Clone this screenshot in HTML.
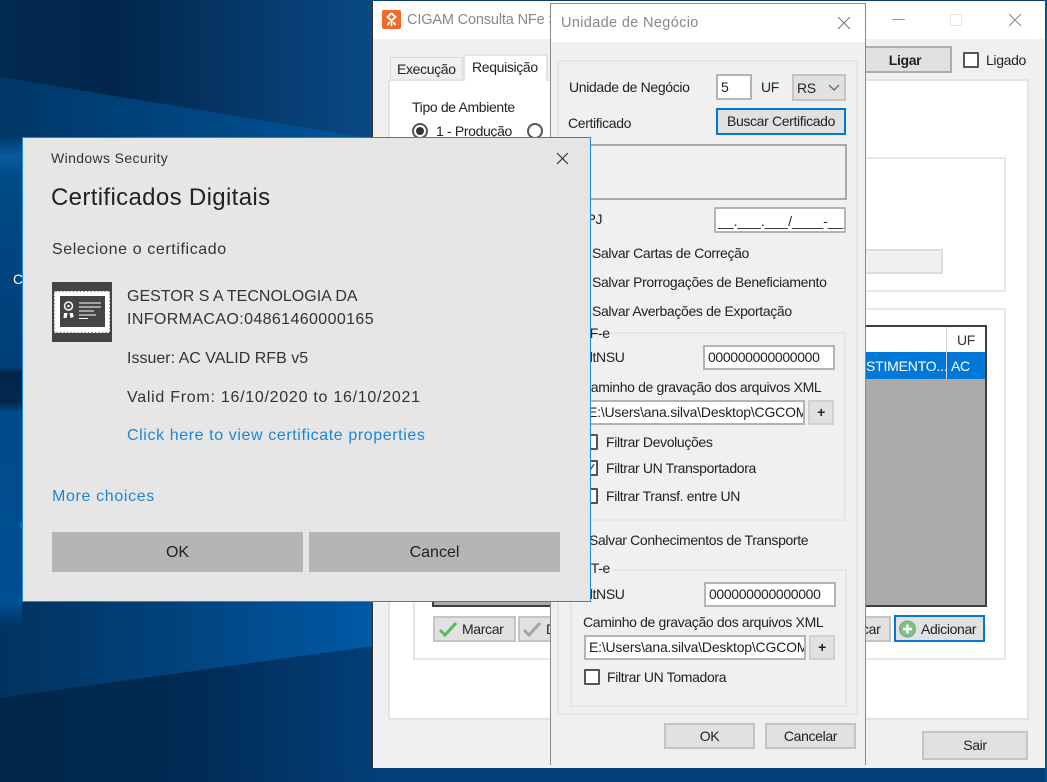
<!DOCTYPE html>
<html><head><meta charset="utf-8"><title>Certificados Digitais</title>
<style>
html,body{margin:0;padding:0}
body{width:1047px;height:782px;overflow:hidden;position:relative;background:#02305f;font-family:"Liberation Sans",sans-serif;color:#1a1a1a}
.a,.t,.b{position:absolute;box-sizing:border-box}
.t{white-space:nowrap;font-size:14px;line-height:20px;height:20px;color:#222;letter-spacing:-.35px;filter:blur(.3px)}
.b{background:#e1e1e1;border:2px solid #c4c4c4;text-align:center;font-size:14px;color:#222;letter-spacing:-.35px}
.in{position:absolute;box-sizing:border-box;background:#fff;border:2px solid #b4b4b4;font-size:14px;color:#222;white-space:nowrap;overflow:hidden;padding-left:3px;letter-spacing:-.35px}
.cb{position:absolute;box-sizing:border-box;width:16px;height:16px;background:#fff;border:2px solid #555;border-radius:1px}
.g{position:absolute;box-sizing:border-box;border:2px solid #e6e6e6}
.dt{position:absolute;white-space:nowrap;font-size:16px;line-height:22px;height:22px;color:#333;filter:blur(.25px)}
</style></head>
<body>
<svg class="a" style="left:0;top:0" width="1047" height="782" viewBox="0 0 1047 782">
<defs>
<linearGradient id="d1" x1="0" y1="0" x2="1" y2="0"><stop offset="0" stop-color="#032a52"/><stop offset=".3" stop-color="#02264b"/><stop offset="1" stop-color="#0a4a88"/></linearGradient>
<linearGradient id="d2" x1="0" y1="0" x2="1" y2="0"><stop offset="0" stop-color="#003767"/><stop offset="1" stop-color="#00559c"/></linearGradient>
<linearGradient id="d3" x1="0" y1="0" x2="1" y2="0"><stop offset="0" stop-color="#02325f"/><stop offset=".4" stop-color="#024078"/><stop offset="1" stop-color="#005aa8"/></linearGradient>
<linearGradient id="d4" x1="0" y1="0" x2="1" y2="0"><stop offset="0" stop-color="#012748"/><stop offset=".5" stop-color="#012b55"/><stop offset="1" stop-color="#023f78"/></linearGradient>
<linearGradient id="ls" x1="0" y1="137" x2="0" y2="628" gradientUnits="userSpaceOnUse">
<stop offset="0" stop-color="#003a70"/><stop offset=".04" stop-color="#0a5aa0"/><stop offset=".08" stop-color="#004a88"/>
<stop offset=".47" stop-color="#003e78"/><stop offset=".48" stop-color="#02264a"/><stop offset=".54" stop-color="#02284e"/><stop offset=".56" stop-color="#004a8a"/>
<stop offset=".95" stop-color="#004f92"/><stop offset="1" stop-color="#02325f"/></linearGradient>
</defs>
<rect width="1047" height="782" fill="#02305f"/>
<rect width="380" height="140" fill="url(#d1)"/>
<polygon points="0,77 380,140 380,400 0,400" fill="url(#d2)"/>
<polygon points="0,400 380,400 380,650 0,695" fill="url(#d3)"/>
<polygon points="0,625 140,600 380,600 380,645 0,698" fill="url(#d3)"/>
<polygon points="0,698 380,645 380,782 0,782" fill="url(#d4)"/>
<rect x="0" y="137" width="22" height="491" fill="url(#ls)"/>
<rect x="380" y="0" width="667" height="2" fill="#0f3c68"/>
<rect x="380" y="768" width="667" height="14" fill="#023f78"/>
<rect x="1045" y="0" width="2" height="782" fill="#05508f"/>
<rect x="20" y="522" width="2" height="6" fill="#0a68c0"/>
</svg>
<div class="t" style="left:13px;top:269px;color:#fff">C</div>

<!-- main window -->
<div class="a" style="left:372px;top:1px;width:673px;height:767px;background:#f0f0f0;border-left:1px solid #333"></div>
<div class="a" style="left:373px;top:1px;width:672px;height:38px;background:#fff"></div>
<div class="a" style="left:382px;top:10px;width:19px;height:19px;background:#f4692a;border-radius:2px"></div>
<svg class="a" style="left:382px;top:10px" width="19" height="19" viewBox="0 0 19 19"><path d="M9.500 3L5 8M9.500 3l4.500 5M5 6l4.500 5L14 6M9.500 9v7M5.500 15l2-3M13.500 15l-2-3" stroke="#fff" stroke-width="1.800" fill="none"/></svg>
<div class="t" style="left:407px;top:10px;font-size:14.500px;color:#888;letter-spacing:-.15px">CIGAM Consulta NFe S</div>
<div class="a" style="left:892px;top:19px;width:13px;height:1px;background:#999"></div>
<div class="a" style="left:950px;top:14px;width:12px;height:12px;border:1px solid #e8e8e8"></div>
<svg class="a" style="left:1008px;top:13px" width="14" height="14"><path d="M1 1L13 13M13 1L1 13" stroke="#888" stroke-width="1" fill="none"/></svg>

<div class="a" style="left:390px;top:57px;width:73px;height:23px;background:#f0f0f0;border:1px solid #d9d9d9;border-bottom:0"></div>
<div class="t" style="left:397px;top:59px">Execução</div>
<div class="a" style="left:388px;top:79px;width:641px;height:641px;background:#fff;border:2px solid #e3e3e3"></div>
<div class="a" style="left:463px;top:54px;width:85px;height:27px;background:#fff;border:2px solid #e3e3e3;border-bottom:0"></div>
<div class="t" style="left:472px;top:57px">Requisição</div>
<div class="t" style="left:412px;top:97px">Tipo de Ambiente</div>
<div class="a" style="left:412px;top:123px;width:16px;height:16px;border:2px solid #555;border-radius:50%;background:#fff"></div>
<div class="a" style="left:416px;top:127px;width:8px;height:8px;border-radius:50%;background:#333"></div>
<div class="t" style="left:436px;top:121px">1 - Produção</div>
<div class="a" style="left:527px;top:123px;width:16px;height:16px;border:2px solid #555;border-radius:50%;background:#fff"></div>

<div class="b" style="left:850px;top:46px;width:102px;height:27px;border-color:#adadad;font-weight:bold;line-height:24px;padding-left:8px;color:#222">Ligar</div>
<div class="cb" style="left:963px;top:52px"></div>
<div class="t" style="left:986px;top:50px">Ligado</div>

<div class="g" style="left:413px;top:157px;width:593px;height:135px"></div>
<div class="a" style="left:850px;top:249px;width:93px;height:25px;background:#f0f0f0;border:2px solid #dcdcdc"></div>
<div class="g" style="left:413px;top:308px;width:593px;height:352px"></div>

<div class="a" style="left:432px;top:325px;width:555px;height:282px;background:#ababab;border:2px solid #3f3f3f"></div>
<div class="a" style="left:434px;top:327px;width:551px;height:25px;background:#fff"></div>
<div class="a" style="left:434px;top:352px;width:551px;height:27px;background:#0078d7"></div>
<div class="a" style="left:946px;top:327px;width:1px;height:52px;background:#cfd8e0"></div>
<div class="t" style="left:957px;top:330px;color:#333">UF</div>
<div class="t" style="left:866px;top:356px;color:#fff;width:80px;overflow:hidden;letter-spacing:-.2px">STIMENTO...</div>
<div class="t" style="left:951px;top:356px;color:#fff">AC</div>

<div class="b" style="left:433px;top:616px;width:83px;height:26px"></div>
<svg class="a" style="left:438px;top:620px" width="20" height="18" viewBox="0 0 20 18"><path d="M2 10l5 5L18 3" stroke="#5cb85c" stroke-width="3" fill="none"/></svg>
<div class="t" style="left:462px;top:619px">Marcar</div>
<div class="b" style="left:518px;top:616px;width:100px;height:26px"></div>
<svg class="a" style="left:522px;top:620px" width="20" height="18" viewBox="0 0 20 18"><path d="M2 10l5 5L18 3" stroke="#a4a4a4" stroke-width="3" fill="none"/></svg>
<div class="t" style="left:546px;top:619px">D</div>
<div class="b" style="left:790px;top:616px;width:101px;height:26px"></div>
<div class="t" style="left:862px;top:619px">car</div>
<div class="b" style="left:894px;top:615px;width:91px;height:27px;border-color:#0078d7"></div>
<svg class="a" style="left:898px;top:620px" width="19" height="19" viewBox="0 0 19 19"><circle cx="9.500" cy="9" r="8" fill="#7cc47c" stroke="#8a9a8a"/><path d="M9.500 4.500v9M5 9h9" stroke="#fff" stroke-width="2.500"/></svg>
<div class="t" style="left:921px;top:619px">Adicionar</div>

<div class="b" style="left:922px;top:731px;width:106px;height:29px;line-height:25px">Sair</div>

<!-- unidade -->
<div class="a" style="left:550px;top:3px;width:316px;height:762px;background:#f0f0f0;border:1px solid #8a8a8a;border-bottom:0"></div>
<div class="a" style="left:551px;top:4px;width:314px;height:38px;background:#fff"></div>
<div class="t" style="left:561px;top:13px;font-size:14.500px;color:#888;letter-spacing:.35px">Unidade de Negócio</div>
<svg class="a" style="left:837px;top:16px" width="14" height="14"><path d="M1 1L13 13M13 1L1 13" stroke="#777" stroke-width="1" fill="none"/></svg>
<div class="g" style="left:557px;top:60px;width:301px;height:655px"></div>

<div class="t" style="left:569px;top:77px">Unidade de Negócio</div>
<div class="in" style="left:716px;top:74px;width:36px;height:26px;line-height:22px">5</div>
<div class="t" style="left:761px;top:77px">UF</div>
<div class="a" style="left:792px;top:74px;width:54px;height:27px;background:#e1e1e1;border:2px solid #c4c4c4"></div>
<div class="t" style="left:797px;top:78px">RS</div>
<svg class="a" style="left:828px;top:84px" width="12" height="8"><path d="M1 1l5 5 5-5" stroke="#666" stroke-width="1.300" fill="none"/></svg>
<div class="t" style="left:568px;top:113px">Certificado</div>
<div class="b" style="left:716px;top:108px;width:130px;height:27px;border-color:#0078d7;line-height:23px">Buscar Certificado</div>
<div class="a" style="left:564px;top:144px;width:283px;height:56px;background:#f0f0f0;border:2px solid #a8a8a8"></div>
<div class="t" style="left:567px;top:209px">CNPJ</div>
<div class="in" style="left:714px;top:207px;width:132px;height:26px;line-height:24px;padding-left:2px;letter-spacing:0">__.___.___/____-__</div>
<div class="t" style="left:592px;top:243px">Salvar Cartas de Correção</div>
<div class="t" style="left:592px;top:272px">Salvar Prorrogações de Beneficiamento</div>
<div class="t" style="left:592px;top:301px">Salvar Averbações de Exportação</div>

<div class="g" style="left:566px;top:332px;width:280px;height:189px"></div>
<div class="a" style="left:574px;top:324px;width:36px;height:18px;background:#f0f0f0"></div>
<div class="t" style="left:580px;top:323px">NF-e</div>
<div class="t" style="left:580px;top:347px">UltNSU</div>
<div class="in" style="left:703px;top:345px;width:132px;height:25px;line-height:21px">000000000000000</div>
<div class="t" style="left:581px;top:377px">Caminho de gravação dos arquivos XML</div>
<div class="in" style="left:583px;top:400px;width:222px;height:25px;line-height:21px;letter-spacing:-.2px">E:\Users\ana.silva\Desktop\CGCOM</div>
<div class="b" style="left:808px;top:400px;width:26px;height:25px;line-height:20px;font-weight:bold;border-color:#d0d0d0">+</div>
<div class="cb" style="left:582px;top:434px"></div>
<div class="t" style="left:606px;top:432px">Filtrar Devoluções</div>
<div class="cb" style="left:582px;top:460px"></div>
<svg class="a" style="left:584px;top:462px" width="12" height="12"><path d="M2 6l3 4 5-8" stroke="#555" stroke-width="1.500" fill="none"/></svg>
<div class="t" style="left:606px;top:458px">Filtrar UN Transportadora</div>
<div class="cb" style="left:582px;top:488px"></div>
<div class="t" style="left:606px;top:486px">Filtrar Transf. entre UN</div>
<div class="t" style="left:589px;top:530px">Salvar Conhecimentos de Transporte</div>

<div class="g" style="left:570px;top:569px;width:277px;height:138px"></div>
<div class="a" style="left:578px;top:561px;width:36px;height:18px;background:#f0f0f0"></div>
<div class="t" style="left:581px;top:558px">CT-e</div>
<div class="t" style="left:580px;top:584px">UltNSU</div>
<div class="in" style="left:704px;top:582px;width:132px;height:25px;line-height:21px">000000000000000</div>
<div class="t" style="left:583px;top:612px">Caminho de gravação dos arquivos XML</div>
<div class="in" style="left:584px;top:635px;width:222px;height:25px;line-height:21px;letter-spacing:-.2px">E:\Users\ana.silva\Desktop\CGCOM</div>
<div class="b" style="left:809px;top:635px;width:26px;height:25px;line-height:20px;font-weight:bold;border-color:#d0d0d0">+</div>
<div class="cb" style="left:584px;top:669px"></div>
<div class="t" style="left:607px;top:667px">Filtrar UN Tomadora</div>
<div class="b" style="left:664px;top:723px;width:91px;height:26px;line-height:22px">OK</div>
<div class="b" style="left:765px;top:723px;width:91px;height:26px;line-height:22px">Cancelar</div>

<!-- security dialog -->
<div class="a" style="left:22px;top:137px;width:569px;height:465px;background:#e6e6e6;border:1px solid #1e88dc"></div>
<div class="dt" style="left:51px;top:147px;font-size:14px;letter-spacing:.37px">Windows Security</div>
<svg class="a" style="left:556px;top:152px" width="13" height="13"><path d="M1 1L12 12M12 1L1 12" stroke="#333" stroke-width="1.200" fill="none"/></svg>
<div class="dt" style="left:51px;top:183px;font-size:24px;line-height:30px;height:30px;color:#222;letter-spacing:.35px">Certificados Digitais</div>
<div class="dt" style="left:52px;top:239px;letter-spacing:.6px">Selecione o certificado</div>
<svg class="a" style="left:52px;top:282px" width="60" height="60" viewBox="0 0 60 60">
<rect width="60" height="60" fill="#444"/>
<rect x="2" y="9" width="56" height="42" rx="2" fill="#fff"/>
<rect x="2" y="9" width="56" height="42" rx="2" fill="none" stroke="#444" stroke-width="1.400" stroke-linecap="round" stroke-dasharray="0.1 3.4"/>
<rect x="8" y="14" width="45" height="31" fill="#444"/>
<circle cx="16.500" cy="24" r="4" fill="none" stroke="#fff" stroke-width="1.500"/>
<circle cx="16.500" cy="24" r="1.300" fill="#fff"/>
<path d="M12 31h3.500l-1 5h-3zM17.500 31H21l.5 4-3 1z" fill="#fff"/>
<path d="M27 21h22M27 25h22M27 29h15M27 33h17M27 36.500h9" stroke="#fff" stroke-width="1"/>
</svg>
<div class="dt" style="left:127px;top:286px">GESTOR S A TECNOLOGIA DA</div>
<div class="dt" style="left:127px;top:309px;letter-spacing:.38px">INFORMACAO:04861460000165</div>
<div class="dt" style="left:127px;top:348px">Issuer: AC VALID RFB v5</div>
<div class="dt" style="left:127px;top:387px;letter-spacing:.73px">Valid From: 16/10/2020 to 16/10/2021</div>
<div class="dt" style="left:127px;top:425px;color:#1a86d9;letter-spacing:.6px">Click here to view certificate properties</div>
<div class="dt" style="left:52px;top:486px;color:#1a86d9;letter-spacing:.65px">More choices</div>
<div class="a" style="left:52px;top:532px;width:251px;height:40px;background:#b5b5b5;text-align:center;font-size:16px;line-height:42px;color:#222">OK</div>
<div class="a" style="left:309px;top:532px;width:251px;height:40px;background:#b5b5b5;text-align:center;font-size:16px;line-height:42px;color:#222">Cancel</div>
</body></html>
